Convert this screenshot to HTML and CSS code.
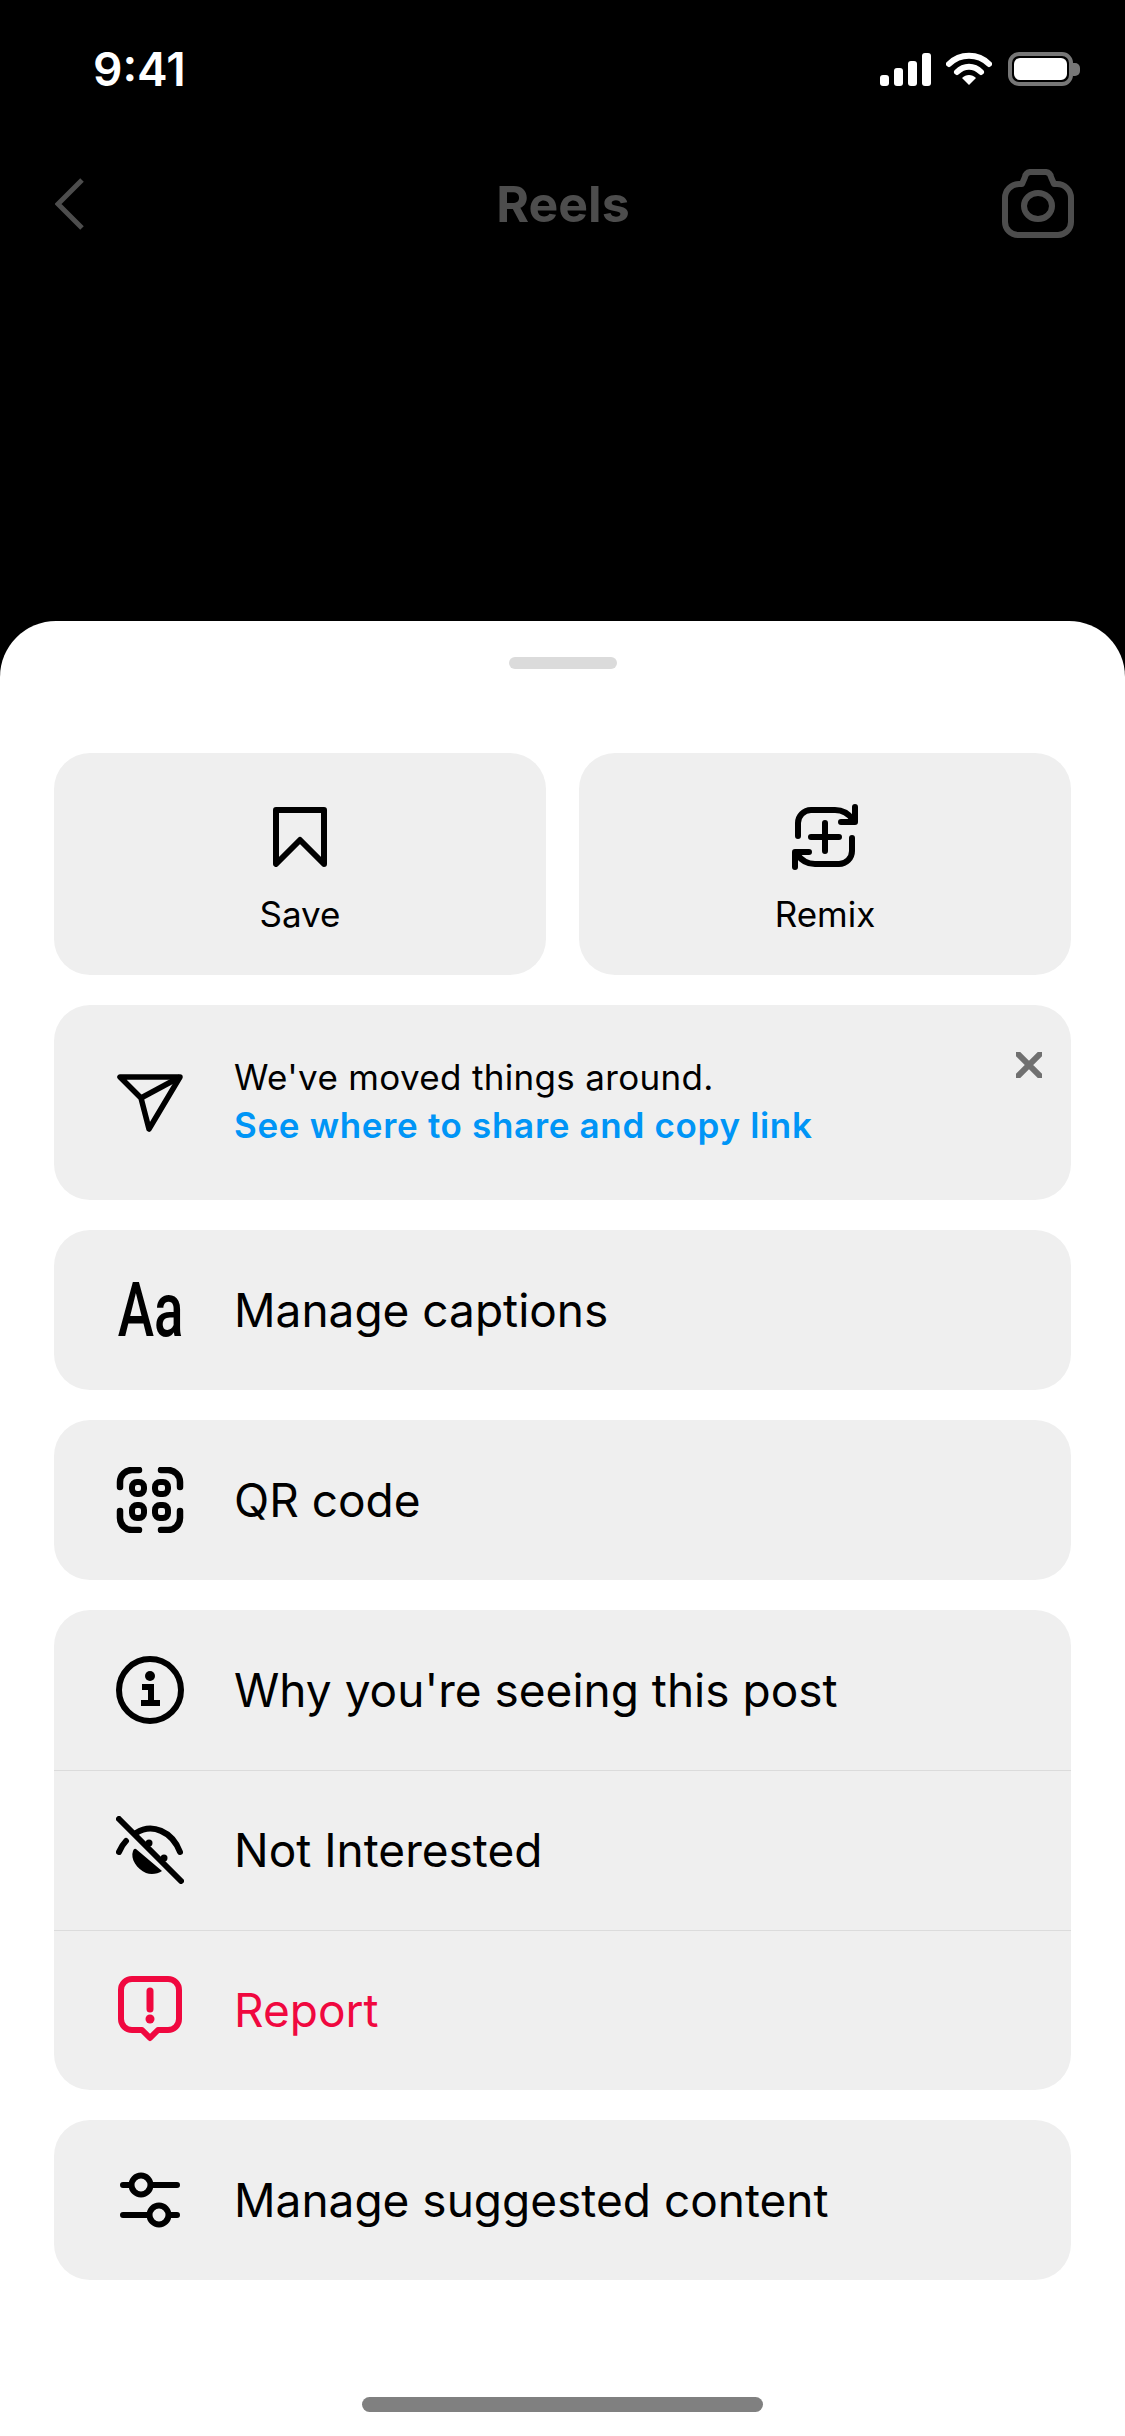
FILE: index.html
```html
<!doctype html>
<html>
<head>
<meta charset="UTF-8">
<title>Reels</title>
<link rel="stylesheet" href="styles.css">
</head>
<body>
<div class="top">
  <div class="status">
    <span class="time">9:41</span>
    <div class="status-icons">
      <svg class="signal" width="51" height="33" viewBox="0 0 51 33"><rect x="0" y="22" width="9" height="11" rx="3"/><rect x="14" y="15" width="9" height="18" rx="3"/><rect x="28" y="8" width="9" height="25" rx="3"/><rect x="42" y="0" width="9" height="33" rx="3"/></svg>
      <svg class="wifi" width="46" height="34" viewBox="0 0 46 34"><path d="M3 12 C14 1 32 1 43 12" fill="none" stroke="#fff" stroke-width="6" stroke-linecap="round"/><path d="M11 20 C18 13 28 13 35 20" fill="none" stroke="#fff" stroke-width="6" stroke-linecap="round"/><path d="M16 26 C20 22 26 22 30 26 L23 33 Z" fill="#fff"/></svg>
      <div class="battery"><div class="battery-fill"></div></div>
      <div class="battery-cap"></div>
    </div>
  </div>
  <div class="nav">
    <svg class="back" width="29" height="52" viewBox="0 0 29 52"><path d="M27 2 L3 26 L27 50" fill="none" stroke="#4d4d4d" stroke-width="5"/></svg>
    <span class="nav-title">Reels</span>
    <svg class="camera" width="72" height="70" viewBox="0 0 72 70"><path d="M3 30 a14 14 0 0 1 14-14 h3 l3-7 a6 6 0 0 1 5-5 h16 a6 6 0 0 1 5 5 l3 7 h3 a14 14 0 0 1 14 14 v24 a13 13 0 0 1-13 13 h-40 a13 13 0 0 1-13-13 z" fill="none" stroke="#4d4d4d" stroke-width="6" stroke-linejoin="round"/><ellipse cx="36" cy="38" rx="14" ry="13" fill="none" stroke="#4d4d4d" stroke-width="6"/></svg>
  </div>
</div>

<div class="sheet">
  <div class="handle"></div>

  <div class="actions">
    <div class="action">
      <div class="action-icon"><svg width="54" height="60" viewBox="0 0 54 60"><path d="M3 3 H51 V57 L27 33 L3 57 Z" fill="none" stroke="#000" stroke-width="6" stroke-linejoin="round"/></svg></div>
      <span>Save</span>
    </div>
    <div class="action">
      <div class="action-icon"><svg width="66" height="66" viewBox="0 0 66 66"><g fill="none" stroke="#000" stroke-width="6" stroke-linecap="round" stroke-linejoin="round"><path d="M6 32 V19 a13 13 0 0 1 13-13 H43 c8 0 14 4 18 10"/><path d="M63 3 V18 H49"/><path d="M60 34 V47 a13 13 0 0 1-13 13 H23 c-8 0-14-4-18-10"/><path d="M3 63 V48 H17"/><path d="M33 19 V47 M19 33 H47"/></g></svg></div>
      <span>Remix</span>
    </div>
  </div>

  <div class="card banner">
    <svg class="icon" width="68" height="60" viewBox="0 0 68 60"><g fill="none" stroke="#000" stroke-width="5.5" stroke-linejoin="round"><path d="M4 4 H64 L33 56 L25 25 Z"/><path d="M25 25 L64 4"/></g></svg>
    <div class="banner-text">
      <div>We've moved things around.</div>
      <div class="link">See where to share and copy link</div>
    </div>
    <svg class="close" width="26" height="26" viewBox="0 0 26 26"><path d="M2 2 L24 24 M24 2 L2 24" stroke="#707070" stroke-width="6" stroke-linecap="round"/></svg>
  </div>

  <div class="card">
    <div class="row">
      <span class="icon aa"><span>Aa</span></span>
      <span class="label">Manage captions</span>
    </div>
  </div>

  <div class="card">
    <div class="row">
      <svg class="icon" width="68" height="66" viewBox="0 0 68 66"><g fill="none" stroke="#000" stroke-width="6.5" stroke-linecap="round"><path d="M4 20 V15 a12 12 0 0 1 12-12 H23"/><path d="M45 3 H52 a12 12 0 0 1 12 12 V20"/><path d="M64 44 V51 a12 12 0 0 1-12 12 H45"/><path d="M23 63 H16 a12 12 0 0 1-12-12 V44"/></g><g fill="none" stroke="#000" stroke-width="6"><rect x="16" y="15" width="12" height="12" rx="5"/><rect x="39" y="15" width="13" height="12" rx="5"/><rect x="16" y="38" width="12" height="13" rx="5"/><rect x="39" y="38" width="13" height="13" rx="5"/></g></svg>
      <span class="label">QR code</span>
    </div>
  </div>

  <div class="card">
    <div class="row">
      <svg class="icon" width="68" height="68" viewBox="0 0 68 68"><circle cx="34" cy="34" r="31" fill="none" stroke="#000" stroke-width="6"/><circle cx="34" cy="20" r="5"/><path d="M26 31 H35 V46 M25 47 H44" fill="none" stroke="#000" stroke-width="6"/></svg>
      <span class="label">Why you're seeing this post</span>
    </div>
    <div class="row sep">
      <svg class="icon" width="68" height="68" viewBox="0 0 68 68"><g fill="none" stroke="#000" stroke-width="6" stroke-linecap="round"><path d="M3 3 L65 65"/><path d="M20 17 C36 7 56 15 64 36"/><path d="M3 36 Q6 29 10 25"/></g><path d="M20 33 L46 55 C42 58 35 59 30 57 C21 53 14 43 17 35 Q18 32 20 33 Z"/><circle cx="33" cy="27" r="3.5"/><circle cx="48" cy="42" r="3.5"/></svg>
      <span class="label">Not Interested</span>
    </div>
    <div class="row sep report">
      <svg class="icon" width="68" height="68" viewBox="0 0 68 68"><path d="M16 3 H52 a11 11 0 0 1 11 11 V43 a11 11 0 0 1-11 11 H42 L34 62 L26 54 H16 a11 11 0 0 1-11-11 V14 a11 11 0 0 1 11-11 Z" fill="none" stroke="#f0083f" stroke-width="6" stroke-linejoin="round"/><path d="M34 15 V33" stroke="#f0083f" stroke-width="7" stroke-linecap="round"/><circle cx="34" cy="43" r="4.5" fill="#f0083f"/></svg>
      <span class="label">Report</span>
    </div>
  </div>

  <div class="card">
    <div class="row">
      <svg class="icon" width="68" height="56" viewBox="0 0 68 56"><g fill="none" stroke="#000" stroke-width="6" stroke-linecap="round"><path d="M7 13 H15 M35 13 H61"/><circle cx="25" cy="13" r="9.5"/><path d="M7 43 H33 M53 43 H61"/><circle cx="43" cy="43" r="9.5"/></g></svg>
      <span class="label">Manage suggested content</span>
    </div>
  </div>

  <div class="home"></div>
</div>
</body>
</html>
```

FILE: styles.css
```css
* { box-sizing: border-box; }
html, body { margin: 0; padding: 0; }
body { width: 1125px; height: 2436px; background: #000; font-family: Inter, "Noto Sans", sans-serif; display: flex; flex-direction: column; overflow: hidden; }

.top { height: 621px; padding: 52px 45px 0 55px; }
.status { display: flex; justify-content: space-between; align-items: flex-start; padding-left: 38px; height: 34px; }
.time { color: #fff; font-size: 46px; font-weight: 600; line-height: 34px; }
.status-icons { display: flex; align-items: center; height: 34px; }
.signal { fill: #fff; margin-right: 15px; }
.wifi { margin-right: 16px; }
.battery { width: 65px; height: 34px; border: 4px solid #777; border-radius: 11px; padding: 2px; }
.battery-fill { height: 100%; background: #fff; border-radius: 6px; }
.battery-cap { width: 7px; height: 13px; background: #777; border-radius: 0 5px 5px 0; }

.nav { margin-top: 83px; display: grid; grid-template-columns: 1fr auto 1fr; align-items: center; padding-right: 6px; }
.nav-title { color: #4d4d4d; font-size: 50px; font-weight: 700; line-height: 70px; padding-right: 3px; }
.back { justify-self: start; }
.camera { justify-self: end; margin-top: -2px; }

.sheet { height: 1815px; background: #fff; border-radius: 56px 56px 0 0; padding: 36px 54px 0; display: flex; flex-direction: column; }
.handle { width: 108px; height: 12px; border-radius: 6px; background: #dbdbdb; align-self: center; margin-bottom: 84px; }

.actions { display: flex; gap: 33px; margin-bottom: 30px; }
.action { flex: 1; height: 222px; background: #efefef; border-radius: 36px; display: flex; flex-direction: column; align-items: center; padding-top: 51px; color: #000; font-size: 35px; line-height: 44px; }
.action-icon { height: 66px; display: flex; align-items: center; margin-bottom: 22px; }

.card { background: #efefef; border-radius: 36px; margin-bottom: 30px; }
.row { height: 160px; display: flex; align-items: center; padding-left: 62px; font-size: 46px; color: #000; }
.sep { border-top: 1px solid #dbdbdb; padding-bottom: 2px; }
.report { color: #f0083f; }
.icon { flex: none; width: 68px; margin-right: 50px; }
.label { white-space: nowrap; }

.aa { display: flex; justify-content: center; padding-left: 2px; }
.aa span { display: block; font-family: Roboto, sans-serif; font-size: 76px; font-weight: 500; line-height: 70px; transform: scaleX(0.72); }

.banner { height: 195px; display: flex; align-items: center; padding: 0 0 3px 62px; position: relative; }
.banner .icon { margin-top: 3px; }
.banner-text { font-size: 35px; line-height: 48px; color: #000; letter-spacing: 0.33px; }
.link { color: #0095f6; font-weight: 600; letter-spacing: 0.68px; }
.close { position: absolute; top: 47px; right: 29px; }

.home { width: 401px; height: 15px; border-radius: 8px; background: #808080; align-self: center; margin-top: auto; margin-bottom: 24px; }
```
